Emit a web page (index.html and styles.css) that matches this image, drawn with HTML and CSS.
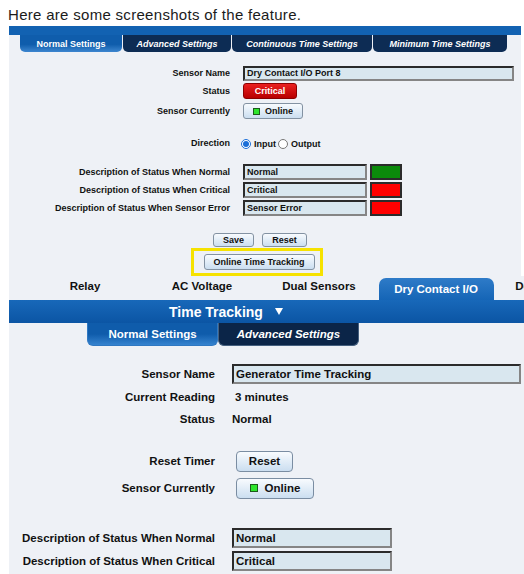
FILE: index.html
```html
<!DOCTYPE html>
<html lang="en">

<head>
    <title>Time Tracking</title>
    <meta charset="utf-8">
    <meta name="viewport" content="width=device-width, initial-scale=1.0">
    <link rel="stylesheet" href="styles.css">
</head>

<body>

    <p class="intro">Here are some screenshots of the feature.</p>

    <!-- dry contact port settings -->
    <section class="shot small">
        <nav class="tabs">
            <span class="tab valgt t1">Normal Settings</span>
            <span class="tab t2">Advanced Settings</span>
            <span class="tab t3">Continuous Time Settings</span>
            <span class="tab t4">Minimum Time Settings</span>
        </nav>

        <div class="form">
            <div class="row">
                <span class="label">Sensor Name</span>
                <span class="value"><input class="field long" type="text" value="Dry Contact I/O Port 8"></span>
            </div>
            <div class="row">
                <span class="label">Status</span>
                <span class="value"><button class="btn critical">Critical</button></span>
            </div>
            <div class="row step-a">
                <span class="label">Sensor Currently</span>
                <span class="value"><button class="btn online"><i class="dot"></i>Online</button></span>
            </div>
            <div class="row step-b">
                <span class="label">Direction</span>
                <span class="value">
                    <label class="radio"><input type="radio" name="dir" checked>Input</label>
                    <label class="radio"><input type="radio" name="dir">Output</label>
                </span>
            </div>
            <div class="row step-c">
                <span class="label">Description of Status When Normal</span>
                <span class="value"><input class="field desc" type="text" value="Normal"><i class="swatch green"></i></span>
            </div>
            <div class="row">
                <span class="label">Description of Status When Critical</span>
                <span class="value"><input class="field desc" type="text" value="Critical"><i class="swatch red"></i></span>
            </div>
            <div class="row">
                <span class="label">Description of Status When Sensor Error</span>
                <span class="value"><input class="field desc" type="text" value="Sensor Error"><i class="swatch red"></i></span>
            </div>

            <div class="actions">
                <button class="btn save">Save</button>
                <button class="btn reset">Reset</button>
            </div>
            <div class="track-row">
                <div class="highlight">
                    <button class="btn track">Online Time Tracking</button>
                </div>
            </div>
        </div>
    </section>

    <!-- time tracking sensor -->
    <section class="shot large">
        <nav class="sections">
            <span class="section">Relay</span>
            <span class="section">AC Voltage</span>
            <span class="section">Dual Sensors</span>
            <span class="section valgt">Dry Contact I/O</span>
            <span class="section">Door Sensors</span>
        </nav>

        <div class="titlebar">
            Time Tracking
            <svg class="arrow" width="8" height="7" viewBox="0 0 8 7"><path d="M0 0H8L4 7Z" fill="#fff"/></svg>
        </div>

        <nav class="subtabs">
            <span class="subtab valgt">Normal Settings</span>
            <span class="subtab">Advanced Settings</span>
        </nav>

        <div class="form">
            <div class="row">
                <span class="label">Sensor Name</span>
                <span class="value"><input class="field long" type="text" value="Generator Time Tracking"></span>
            </div>
            <div class="row">
                <span class="label">Current Reading</span>
                <span class="value reading">3 minutes</span>
            </div>
            <div class="row">
                <span class="label">Status</span>
                <span class="value">Normal</span>
            </div>
            <div class="row tall step-d">
                <span class="label">Reset Timer</span>
                <span class="value"><button class="btn reset">Reset</button></span>
            </div>
            <div class="row tall">
                <span class="label">Sensor Currently</span>
                <span class="value"><button class="btn online"><i class="dot"></i>Online</button></span>
            </div>
            <div class="row step-e">
                <span class="label">Description of Status When Normal</span>
                <span class="value"><input class="field desc" type="text" value="Normal"></span>
            </div>
            <div class="row">
                <span class="label">Description of Status When Critical</span>
                <span class="value"><input class="field desc" type="text" value="Critical"></span>
            </div>
        </div>
    </section>

</body>

</html>
```

FILE: styles.css
```css
body {
    margin: 0;
    background-color: #ffffff;
    font-family: "Liberation Sans", Arial, sans-serif;
    color: #111;
}

.intro {
    margin: 0;
    height: 26px;
    box-sizing: border-box;
    padding: 5px 0 0 8px;
    font-size: 15px;
    line-height: 20px;
    letter-spacing: 0.3px;
    color: #1b1b1b;
}

.shot {
    margin-left: 9px;
    background-color: #eef1f6;
    font-weight: bold;
    overflow: hidden;
}

.label {
    text-align: right;
    white-space: nowrap;
}

.value {
    display: flex;
    align-items: center;
    white-space: nowrap;
}

.field {
    box-sizing: border-box;
    margin: 0;
    padding: 0 2px;
    border: 2px solid;
    border-color: #2b2b2b #858585 #858585 #2b2b2b;
    background-color: #d9e7ef;
    font: inherit;
    color: #111;
    outline: none;
}

.btn {
    box-sizing: border-box;
    display: flex;
    align-items: center;
    justify-content: center;
    padding: 0;
    border: 1px solid #8392a2;
    border-radius: 3px;
    background: linear-gradient(#f8fbfe, #cbdef0);
    font: inherit;
    color: #111;
}

.dot {
    box-sizing: border-box;
    display: inline-block;
    background-color: #2de52d;
    border: 1px solid #1c5a1c;
}

/* small screenshot */

.small {
    width: 512px;
    height: 250px;
    font-size: 9px;
}

.tabs {
    display: flex;
    gap: 1px;
    height: 17px;
    padding-left: 11px;
    border-top: 9px solid #1262b2;
}

.tab {
    display: flex;
    align-items: center;
    justify-content: center;
    background-color: #0d2c54;
    color: #fff;
    font-style: italic;
    border-radius: 0 0 5px 5px;
}

.tab.valgt {
    background: linear-gradient(#0f5dac 55%, #3d86cf);
    font-style: normal;
}

.t1 { width: 102px; }
.t2 { width: 108px; }
.t3 { width: 140px; }
.t4 { width: 134px; }

.small .form {
    padding-top: 12px;
}

.small .row {
    display: grid;
    grid-template-columns: 221px 1fr;
    column-gap: 13px;
    align-items: center;
    height: 18px;
}

.step-a { margin-top: 2px; }
.step-b { margin-top: 14px; }
.step-c { margin-top: 11px; }

.small .field { height: 15px; }
.small .field.long { width: 271px; }
.small .field.desc { width: 124px; height: 16px; }

.swatch {
    box-sizing: border-box;
    display: inline-block;
    width: 32px;
    height: 16px;
    margin-left: 3px;
    border: 2px solid #2b2b2b;
}

.green { background-color: #0b8a0b; }
.red { background-color: #ff0000; }

.critical {
    width: 54px;
    height: 16px;
    border-color: #8c0000;
    background: linear-gradient(#ea2020, #b80000);
    color: #fff;
}

.small .online {
    width: 60px;
    height: 16px;
}

.small .dot {
    width: 7px;
    height: 7px;
    margin-right: 5px;
}

.radio {
    display: flex;
    align-items: center;
    margin-right: 4px;
    padding-top: 2px;
}

.radio input {
    width: 10px;
    height: 10px;
    margin: 0 3px 0 -2px;
    accent-color: #1a6ed8;
}

.actions {
    display: flex;
    justify-content: center;
    gap: 8px;
    margin-top: 16px;
    padding-right: 10px;
}

.save { width: 41px; height: 14px; }
.small .reset { width: 45px; height: 14px; }

.track-row {
    display: flex;
    justify-content: center;
    margin-top: 1px;
    padding-right: 17px;
}

.highlight {
    border: 3px solid #f6e200;
    padding: 3px 5px 3px 10px;
}

.track { width: 111px; height: 16px; }

/* large screenshot */

.large {
    width: 515px;
    height: 298px;
    font-size: 11.5px;
}

.sections {
    display: flex;
    height: 24px;
    padding-left: 17.5px;
}

.section {
    flex: 0 0 117px;
    box-sizing: border-box;
    padding-top: 3px;
    line-height: 14px;
    text-align: center;
    white-space: nowrap;
}

.section.valgt {
    flex-basis: 115px;
    margin: 2px 1px 0;
    padding-top: 4px;
    border-radius: 7px 7px 0 0;
    background: linear-gradient(#2e7bc8, #1565b6);
    color: #fff;
}

.titlebar {
    display: flex;
    align-items: center;
    height: 23px;
    padding-left: 160px;
    background: linear-gradient(#1868b9, #0b55a4);
    color: #fff;
    font-size: 14px;
}

.arrow {
    margin-left: 12px;
}

.subtabs {
    display: flex;
    height: 23px;
    padding-left: 78px;
}

.subtab {
    display: flex;
    align-items: center;
    justify-content: center;
    width: 141px;
    box-sizing: border-box;
    border: 1px solid #45607f;
    border-top: none;
    border-radius: 0 0 6px 6px;
    background-color: #0b2548;
    color: #fff;
    font-style: italic;
}

.subtab.valgt {
    width: 131px;
    border-color: #2f78c2;
    background: linear-gradient(#0f5cab 50%, #3583cf);
    font-style: normal;
}

.large .form {
    padding-top: 17px;
}

.large .row {
    display: grid;
    grid-template-columns: 206px 1fr;
    column-gap: 17px;
    align-items: center;
    height: 22.5px;
}

.large .row.tall { height: 27px; }

.step-d { margin-top: 17px; }
.step-e { margin-top: 25.5px; }

.reading { padding-left: 3px; }

.large .field { height: 20px; }
.large .field.long { width: 289px; }
.large .field.desc { width: 160px; }

.large .btn {
    margin-left: 4px;
    border-radius: 4px;
    border-color: #7a8da2;
}

.large .reset { width: 57px; height: 21px; }
.large .online { width: 78px; height: 21px; }

.large .dot {
    width: 8px;
    height: 8px;
    margin-right: 7px;
}
```
